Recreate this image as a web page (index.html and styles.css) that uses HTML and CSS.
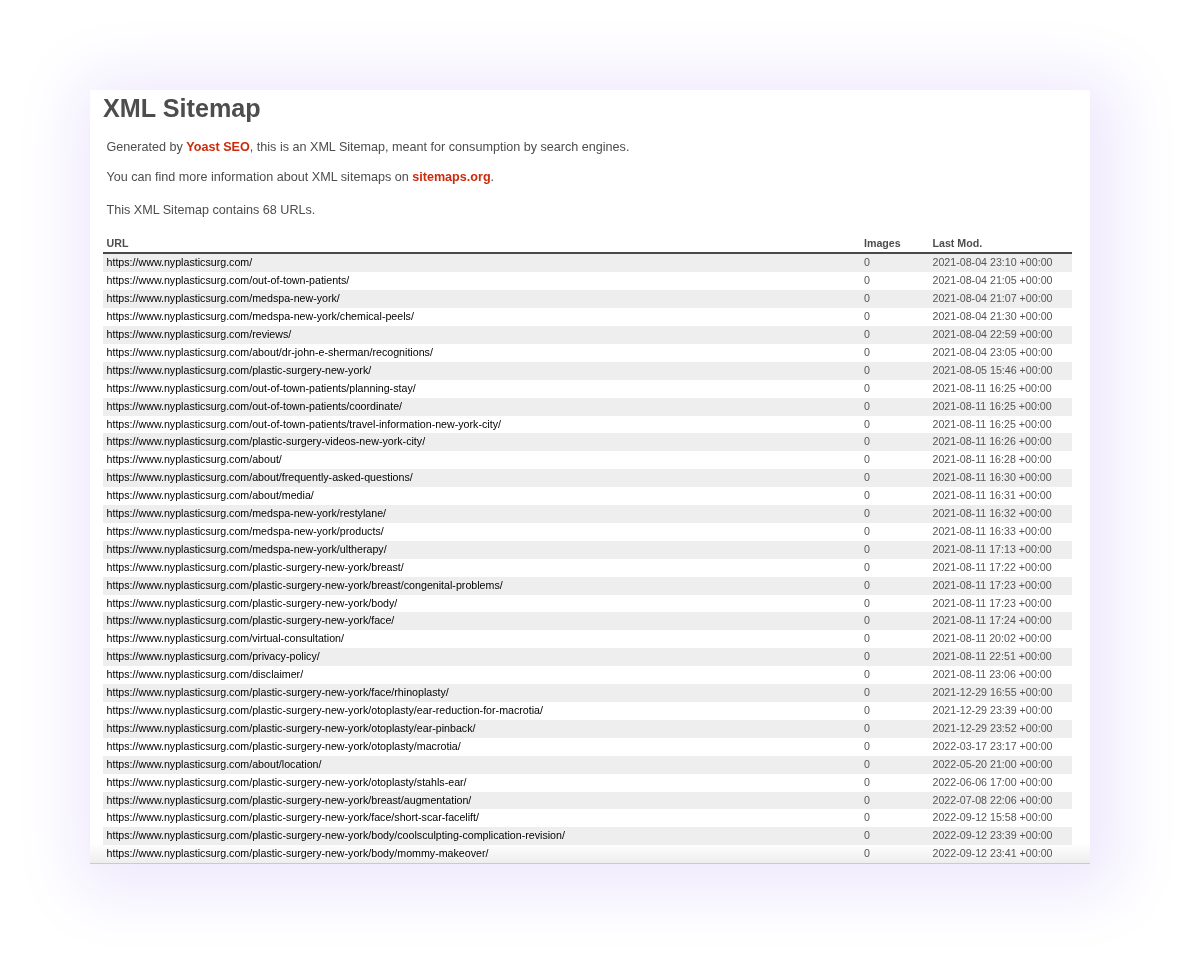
FILE: index.html
```html
<!DOCTYPE html>
<html lang="en">
<head>
<meta charset="utf-8">
<title>XML Sitemap</title>
<link rel="stylesheet" href="styles.css">
</head>
<body>
<main class="card">
  <h1 class="title">XML Sitemap</h1>
  <p class="intro first">Generated by <a href="#">Yoast SEO</a>, this is an XML Sitemap, meant for consumption by search engines.</p>
  <p class="intro second">You can find more information about XML sitemaps on <a href="#">sitemaps.org</a>.</p>
  <p class="intro third">This XML Sitemap contains 68 URLs.</p>
  <div class="sitemap">
    <div class="head"><span>URL</span><span>Images</span><span>Last Mod.</span></div>
    <div class="row"><span class="url">https://www.nyplasticsurg.com/</span><span>0</span><span>2021-08-04 23:10 +00:00</span></div>
    <div class="row"><span class="url">https://www.nyplasticsurg.com/out-of-town-patients/</span><span>0</span><span>2021-08-04 21:05 +00:00</span></div>
    <div class="row"><span class="url">https://www.nyplasticsurg.com/medspa-new-york/</span><span>0</span><span>2021-08-04 21:07 +00:00</span></div>
    <div class="row"><span class="url">https://www.nyplasticsurg.com/medspa-new-york/chemical-peels/</span><span>0</span><span>2021-08-04 21:30 +00:00</span></div>
    <div class="row"><span class="url">https://www.nyplasticsurg.com/reviews/</span><span>0</span><span>2021-08-04 22:59 +00:00</span></div>
    <div class="row"><span class="url">https://www.nyplasticsurg.com/about/dr-john-e-sherman/recognitions/</span><span>0</span><span>2021-08-04 23:05 +00:00</span></div>
    <div class="row"><span class="url">https://www.nyplasticsurg.com/plastic-surgery-new-york/</span><span>0</span><span>2021-08-05 15:46 +00:00</span></div>
    <div class="row"><span class="url">https://www.nyplasticsurg.com/out-of-town-patients/planning-stay/</span><span>0</span><span>2021-08-11 16:25 +00:00</span></div>
    <div class="row"><span class="url">https://www.nyplasticsurg.com/out-of-town-patients/coordinate/</span><span>0</span><span>2021-08-11 16:25 +00:00</span></div>
    <div class="row"><span class="url">https://www.nyplasticsurg.com/out-of-town-patients/travel-information-new-york-city/</span><span>0</span><span>2021-08-11 16:25 +00:00</span></div>
    <div class="row"><span class="url">https://www.nyplasticsurg.com/plastic-surgery-videos-new-york-city/</span><span>0</span><span>2021-08-11 16:26 +00:00</span></div>
    <div class="row"><span class="url">https://www.nyplasticsurg.com/about/</span><span>0</span><span>2021-08-11 16:28 +00:00</span></div>
    <div class="row"><span class="url">https://www.nyplasticsurg.com/about/frequently-asked-questions/</span><span>0</span><span>2021-08-11 16:30 +00:00</span></div>
    <div class="row"><span class="url">https://www.nyplasticsurg.com/about/media/</span><span>0</span><span>2021-08-11 16:31 +00:00</span></div>
    <div class="row"><span class="url">https://www.nyplasticsurg.com/medspa-new-york/restylane/</span><span>0</span><span>2021-08-11 16:32 +00:00</span></div>
    <div class="row"><span class="url">https://www.nyplasticsurg.com/medspa-new-york/products/</span><span>0</span><span>2021-08-11 16:33 +00:00</span></div>
    <div class="row"><span class="url">https://www.nyplasticsurg.com/medspa-new-york/ultherapy/</span><span>0</span><span>2021-08-11 17:13 +00:00</span></div>
    <div class="row"><span class="url">https://www.nyplasticsurg.com/plastic-surgery-new-york/breast/</span><span>0</span><span>2021-08-11 17:22 +00:00</span></div>
    <div class="row"><span class="url">https://www.nyplasticsurg.com/plastic-surgery-new-york/breast/congenital-problems/</span><span>0</span><span>2021-08-11 17:23 +00:00</span></div>
    <div class="row"><span class="url">https://www.nyplasticsurg.com/plastic-surgery-new-york/body/</span><span>0</span><span>2021-08-11 17:23 +00:00</span></div>
    <div class="row"><span class="url">https://www.nyplasticsurg.com/plastic-surgery-new-york/face/</span><span>0</span><span>2021-08-11 17:24 +00:00</span></div>
    <div class="row"><span class="url">https://www.nyplasticsurg.com/virtual-consultation/</span><span>0</span><span>2021-08-11 20:02 +00:00</span></div>
    <div class="row"><span class="url">https://www.nyplasticsurg.com/privacy-policy/</span><span>0</span><span>2021-08-11 22:51 +00:00</span></div>
    <div class="row"><span class="url">https://www.nyplasticsurg.com/disclaimer/</span><span>0</span><span>2021-08-11 23:06 +00:00</span></div>
    <div class="row"><span class="url">https://www.nyplasticsurg.com/plastic-surgery-new-york/face/rhinoplasty/</span><span>0</span><span>2021-12-29 16:55 +00:00</span></div>
    <div class="row"><span class="url">https://www.nyplasticsurg.com/plastic-surgery-new-york/otoplasty/ear-reduction-for-macrotia/</span><span>0</span><span>2021-12-29 23:39 +00:00</span></div>
    <div class="row"><span class="url">https://www.nyplasticsurg.com/plastic-surgery-new-york/otoplasty/ear-pinback/</span><span>0</span><span>2021-12-29 23:52 +00:00</span></div>
    <div class="row"><span class="url">https://www.nyplasticsurg.com/plastic-surgery-new-york/otoplasty/macrotia/</span><span>0</span><span>2022-03-17 23:17 +00:00</span></div>
    <div class="row"><span class="url">https://www.nyplasticsurg.com/about/location/</span><span>0</span><span>2022-05-20 21:00 +00:00</span></div>
    <div class="row"><span class="url">https://www.nyplasticsurg.com/plastic-surgery-new-york/otoplasty/stahls-ear/</span><span>0</span><span>2022-06-06 17:00 +00:00</span></div>
    <div class="row"><span class="url">https://www.nyplasticsurg.com/plastic-surgery-new-york/breast/augmentation/</span><span>0</span><span>2022-07-08 22:06 +00:00</span></div>
    <div class="row"><span class="url">https://www.nyplasticsurg.com/plastic-surgery-new-york/face/short-scar-facelift/</span><span>0</span><span>2022-09-12 15:58 +00:00</span></div>
    <div class="row"><span class="url">https://www.nyplasticsurg.com/plastic-surgery-new-york/body/coolsculpting-complication-revision/</span><span>0</span><span>2022-09-12 23:39 +00:00</span></div>
    <div class="row"><span class="url">https://www.nyplasticsurg.com/plastic-surgery-new-york/body/mommy-makeover/</span><span>0</span><span>2022-09-12 23:41 +00:00</span></div>
  </div>
</main>
</body>
</html>
```

FILE: styles.css
```css
html, body {
  margin: 0;
  height: 974px;
  background: #fff;
  overflow: hidden;
}
body {
  padding: 90px 110px 0 90px;
  box-sizing: border-box;
  font-family: "Liberation Sans", Arial, sans-serif;
  color: #4d4d4d;
}
.card {
  width: 1000px;
  height: 774px;
  box-sizing: border-box;
  padding: 0 18px 0 13px;
  background: linear-gradient(to top, #eeeeee, #ffffff 20px);
  border-radius: 2px 2px 0 0;
  border-bottom: 1px solid #d6c6cc;
  box-shadow: 8px 8px 66px 22px #eee9fd;
  filter: blur(0.3px);
}
.title {
  margin: 0;
  padding-top: 2px;
  font-size: 25.2px;
  line-height: 32px;
  font-weight: 700;
  color: #4d4d4d;
}
.intro {
  margin: 0;
  padding-left: 3.5px;
  font-size: 12.6px;
  line-height: 16px;
}
.first { margin-top: 15px; }
.second { margin-top: 14px; }
.third { margin-top: 17px; }
.intro a {
  color: #cd2a0c;
  font-weight: 700;
  text-decoration: none;
}
.sitemap {
  margin-top: 16.35px;
  font-size: 10.66px;
}
.head, .row {
  display: grid;
  grid-template-columns: 757.5px 68.5px 1fr;
  padding-left: 3.5px;
  align-items: center;
}
.head {
  height: 18px;
  font-weight: 700;
  border-bottom: 2px solid #4a4a4a;
}
.row {
  height: 17.91px;
  line-height: 17.91px;
  color: #555;
}
.row:nth-child(even) { background: #eee; }
.url { color: #000; }
```
